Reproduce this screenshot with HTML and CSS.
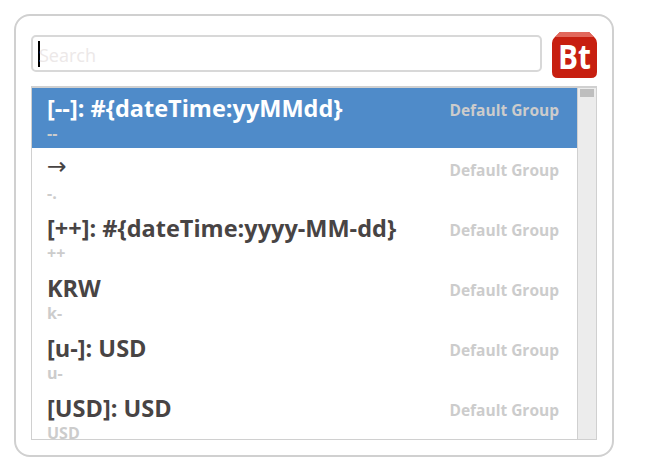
FILE: index.html
```html
<!DOCTYPE html>
<html lang="en">

<head>
    <meta charset="UTF-8">
    <title>Search</title>
    <link rel="stylesheet" href="styles.css">
</head>

<body>
    <div class="panel">
        <div class="top">
            <div class="search"><span class="caret"></span><span class="hint">Search</span></div>
            <svg class="logo" width="45" height="46" viewBox="0 0 45 46">
                <path d="M9 0H36Q38 0 39 2L43 6Q45 8 45 11V40Q45 46 39 46H6Q0 46 0 40V11Q0 8 2 6L6 2Q7 0 9 0Z" fill="#c71f10" />
                <path d="M9 0H36Q38 0 39 2L42 5H3L6 2Q7 0 9 0Z" fill="#e2685c" />
                <text x="6" y="37" textLength="33" lengthAdjust="spacingAndGlyphs" class="logo-text">Bt</text>
            </svg>
        </div>
        <div class="list">
            <ul class="rows">
                <li class="row active">
                    <div class="row-text">
                        <div class="name">[--]: #{dateTime:yyMMdd}</div>
                        <div class="key">--</div>
                    </div>
                    <div class="group">Default Group</div>
                </li>
                <li class="row">
                    <div class="row-text">
                        <div class="name arrow">→</div>
                        <div class="key">-.</div>
                    </div>
                    <div class="group">Default Group</div>
                </li>
                <li class="row">
                    <div class="row-text">
                        <div class="name">[++]: #{dateTime:yyyy-MM-dd}</div>
                        <div class="key">++</div>
                    </div>
                    <div class="group">Default Group</div>
                </li>
                <li class="row">
                    <div class="row-text">
                        <div class="name">KRW</div>
                        <div class="key">k-</div>
                    </div>
                    <div class="group">Default Group</div>
                </li>
                <li class="row">
                    <div class="row-text">
                        <div class="name">[u-]: USD</div>
                        <div class="key">u-</div>
                    </div>
                    <div class="group">Default Group</div>
                </li>
                <li class="row">
                    <div class="row-text">
                        <div class="name">[USD]: USD</div>
                        <div class="key">USD</div>
                    </div>
                    <div class="group">Default Group</div>
                </li>
            </ul>
            <div class="scrollbar"><div class="thumb"></div></div>
        </div>
    </div>
</body>

</html>
```

FILE: styles.css
```css
* {
    margin: 0;
    padding: 0;
    box-sizing: border-box;
}

li {
    list-style: none;
}

body {
    background-color: white;
    font-family: "Open Sans", "Noto Sans", sans-serif;
    padding: 14px;
}

.panel {
    width: 600px;
    height: 443px;
    padding: 16px 15px;
    border: 2px solid rgb(208, 208, 208);
    border-radius: 16px;
}

.top {
    display: flex;
    align-items: flex-start;
    justify-content: space-between;
    width: 566px;
    height: 46px;
    margin-bottom: 8px;
}

.search {
    display: flex;
    align-items: center;
    width: 511px;
    height: 37px;
    margin-top: 3px;
    padding-left: 5px;
    border: 2px solid rgb(216, 216, 216);
    border-radius: 5px;
}

.caret {
    width: 2px;
    height: 26px;
    background-color: black;
}

.hint {
    margin-left: -1px;
    padding-top: 2px;
    font-size: 18px;
    color: rgb(236, 232, 232);
}

.logo {
    flex: none;
}

.logo-text {
    font-family: "Open Sans", sans-serif;
    font-size: 34px;
    font-weight: 700;
    fill: white;
}

.list {
    display: flex;
    width: 566px;
    height: 354px;
    border: 1px solid rgb(208, 208, 208);
    border-top-width: 2px;
    overflow: hidden;
}

.rows {
    flex: 1;
}

.row {
    display: flex;
    justify-content: space-between;
    height: 60px;
    padding: 5px 18px 0 15px;
    color: rgb(72, 68, 68);
}

.row.active {
    background-color: rgb(79, 139, 201);
    color: white;
}

.name {
    height: 30px;
    font-size: 23.5px;
    font-weight: 700;
    line-height: 30px;
    white-space: nowrap;
}

.name.arrow {
    font-family: "DejaVu Sans", sans-serif;
    font-weight: 400;
    line-height: 26px;
}

.key {
    height: 20px;
    font-size: 16px;
    font-weight: 700;
    line-height: 20px;
    color: rgb(204, 204, 204);
}

.group {
    font-size: 15.5px;
    font-weight: 700;
    line-height: 34px;
    color: rgb(204, 204, 204);
}

.scrollbar {
    width: 19px;
    padding: 1px 2px;
    background-color: rgb(236, 236, 236);
    border-left: 1px solid rgb(208, 208, 208);
}

.thumb {
    height: 8px;
    background-color: rgb(190, 190, 190);
}
```
